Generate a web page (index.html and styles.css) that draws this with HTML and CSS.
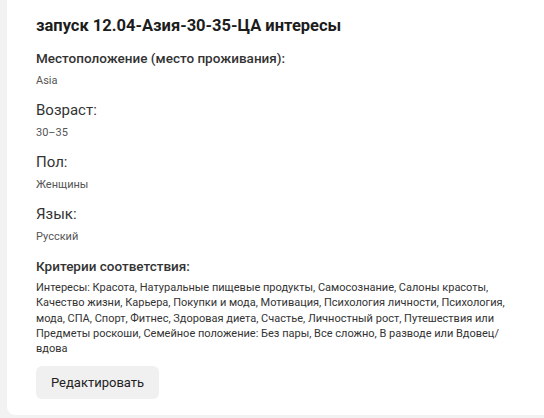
FILE: index.html
```html
<!DOCTYPE html>
<html lang="ru">
<head>
    <meta charset="UTF-8">
    <title>Аудитория</title>
    <link rel="stylesheet" href="styles.css">
</head>
<body>
    <div class="card">
        <h2 class="title">запуск 12.04-Азия-30-35-ЦА интересы</h2>

        <div class="field">
            <div class="label label-strong">Местоположение (место проживания):</div>
            <div class="value">Asia</div>
        </div>

        <div class="field">
            <div class="label">Возраст:</div>
            <div class="value">30–35</div>
        </div>

        <div class="field">
            <div class="label">Пол:</div>
            <div class="value">Женщины</div>
        </div>

        <div class="field">
            <div class="label">Язык:</div>
            <div class="value">Русский</div>
        </div>

        <div class="field field-last">
            <div class="label label-strong">Критерии соответствия:</div>
            <div class="value value-long">Интересы: Красота, Натуральные пищевые продукты, Самосознание, Салоны красоты, Качество жизни, Карьера, Покупки и мода, Мотивация, Психология личности, Психология, мода, СПА, Спорт, Фитнес, Здоровая диета, Счастье, Личностный рост, Путешествия или Предметы роскоши, Семейное положение: Без пары, Все сложно, В разводе или Вдовец/вдова</div>
        </div>

        <button class="edit-btn">Редактировать</button>
    </div>
</body>
</html>
```

FILE: styles.css
```css
/* Page */
body {
    margin: 0;
    padding: 0 0 3px 7px;
    background-color: #f2f2f2;
    font-family: Roboto, "Liberation Sans", Arial, sans-serif;
    color: #1c1c1c;
}

/* Card */
.card {
    background-color: #fff;
    border-bottom-left-radius: 8px;
    padding: 15px 28px 15px 29px;
    height: 385px;
}

.title {
    font-size: 16.5px;
    font-weight: 700;
    margin: 0 0 11px 0;
    line-height: 22px;
    color: #1c1c1c;
}

.field {
    margin-bottom: 9px;
}

.field-last {
    margin-bottom: 0;
}

.label {
    font-size: 15px;
    line-height: 20px;
    color: #333;
    margin-bottom: 3px;
}

.label-strong {
    font-size: 13.5px;
    font-weight: 500;
}

.value {
    font-size: 11px;
    line-height: 20px;
    color: #555;
}

.value-long {
    font-size: 11px;
    line-height: 15.3px;
    color: #333;
    padding-top: 1px;
}

/* Button */
.edit-btn {
    margin-top: 10px;
    background-color: #f0f0f0;
    border: none;
    border-radius: 6px;
    padding: 0 15px;
    height: 33px;
    font-family: Roboto, "Liberation Sans", Arial, sans-serif;
    font-size: 13px;
    color: #222;
    cursor: pointer;
}
```
